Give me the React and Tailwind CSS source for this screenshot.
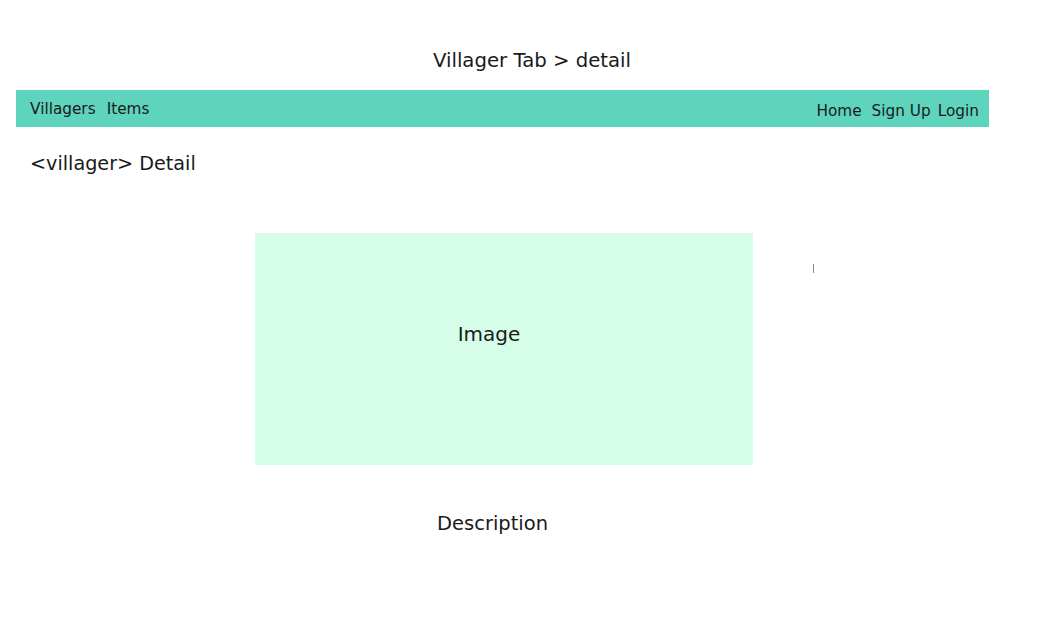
export default function App() {
  return (
    <div className="w-[1040px] h-[626px] bg-white text-[#1a1a1a] font-['DejaVu_Sans',sans-serif] relative overflow-hidden">
      {/* page title */}
      <div className="pt-[48px] pl-[24px] text-center text-[19.7px] leading-[26px]">Villager Tab &gt; detail</div>

      {/* nav bar */}
      <nav className="mt-[16px] ml-[16px] w-[973px] h-[37px] bg-[#5fd4bc] flex justify-between pl-[14px] pr-[10px] text-[15.3px]">
        <div className="flex gap-[11px] pt-[8px]">
          <span>Villagers</span>
          <span>Items</span>
        </div>
        <div className="flex pt-[10px]">
          <span>Home</span>
          <span className="ml-[10px]">Sign Up</span>
          <span className="ml-[7px]">Login</span>
        </div>
      </nav>

      <h1 className="mt-[24px] pl-[30px] text-[19.2px] leading-[26px]">&lt;villager&gt; Detail</h1>

      {/* image placeholder */}
      <div className="mt-[56px] ml-[255px] w-[498px] h-[232px] bg-[#d5fde8] flex justify-center pt-[88px] pr-[30px] text-[20px] leading-[26px]">
        Image
      </div>

      <div className="mt-[46px] pl-[437px] text-[19.5px] leading-[26px]">Description</div>

      {/* text cursor */}
      <div className="absolute left-[813px] top-[264px] w-[1px] h-[9px] bg-[#8a8a8a]" />
    </div>
  );
}
